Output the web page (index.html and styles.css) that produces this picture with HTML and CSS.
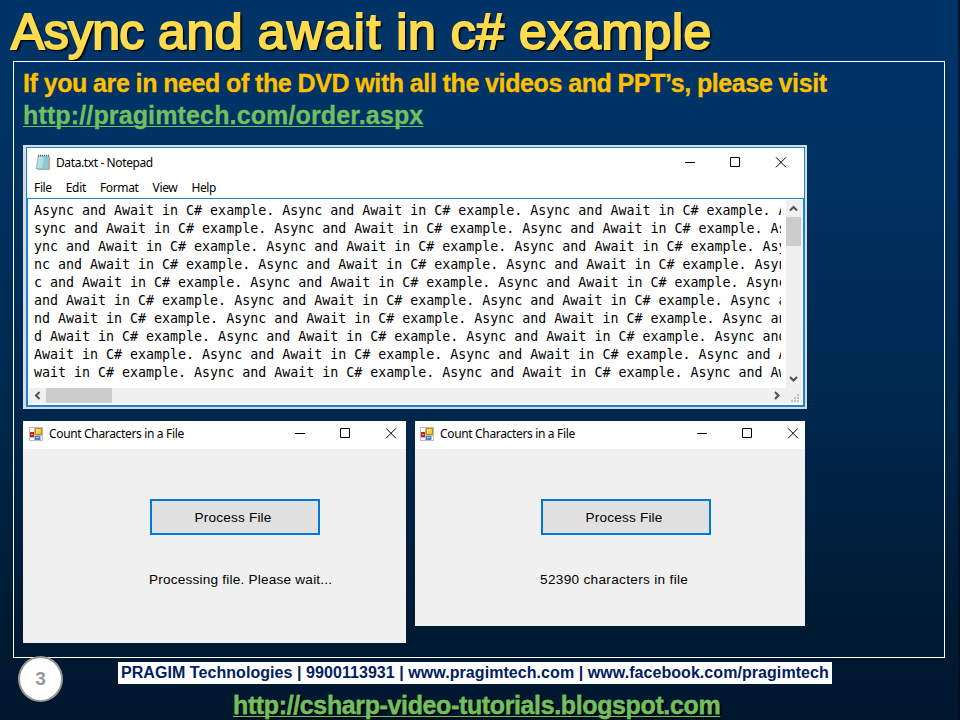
FILE: index.html
```html
<!DOCTYPE html>
<html lang="en">
<head>
<meta charset="utf-8">
<title>Async and await in c# example</title>
<link rel="stylesheet" href="styles.css">
</head>
<body>
<svg class="defs" width="0" height="0">
  <defs>
    <symbol id="controls" viewBox="0 0 102 11">
      <path d="M0 5.5H10M45.5 .5h9v9h-9zM91 .3l10 10M101 .3l-10 10" fill="none" stroke="#000" stroke-width="1"/>
    </symbol>
    <linearGradient id="gold" x1="0" y1="0" x2="1" y2="1"><stop offset="0" stop-color="#fff0a0"/><stop offset="1" stop-color="#efb000"/></linearGradient>
    <symbol id="form" viewBox="0 0 14 14">
      <path d="M0 0h14v14H0z" fill="#bdbdbd"/>
      <path d="M1 1h4v4H1zM1 11h4v2H1zM12 9h1v4h-1z" fill="#fff"/>
      <path d="M6.5 1.5h6v6h-6z" fill="url(#gold)" stroke="#c08c08"/>
      <path d="M1 5h4v5H1z" fill="#b52a20"/><path d="M2 7h2v1H2z" fill="#f5a090"/>
      <path d="M6 9h5v4H6z" fill="#4b7fd5"/><path d="M7 10h3v1H7z" fill="#a9caff"/>
    </symbol>
  </defs>
</svg>
<div class="slide">
  <h1 class="title"><span class="tight">Async</span> and <span class="loose">await</span> in c# example</h1>
  <main class="frame">
    <p class="lead need">If you are in need of the DVD with all the videos and PPT’s, please visit</p>
    <p class="lead"><a class="order">http://pragimtech.com/order.aspx</a></p>

    <section class="notepad">
      <div class="np-window">
        <header class="np-title">
          <svg class="np-icon" width="16" height="17" viewBox="0 0 16 17">
            <path d="M14 2l1 1v13H3z" fill="#b9ad90"/>
            <path d="M3 2h11l-1 13H1z" fill="#8cc9d5" stroke="#9ab4b8" stroke-width=".6"/>
            <path d="M4 3h5L7 14H2z" fill="#b5dfe7"/>
            <path d="M3 1.500h11" stroke="#4c6064" stroke-width="1.500" stroke-dasharray="1 1"/>
          </svg>
          <span class="ui-name">Data.txt - Notepad</span>
          <svg class="controls" width="102" height="11"><use href="#controls"/></svg>
        </header>
        <nav class="menu"><span>File</span><span>Edit</span><span>Format</span><span>View</span><span>Help</span></nav>
        <div class="editor">
<pre class="text">Async and Await in C# example. Async and Await in C# example. Async and Await in C# example. A
sync and Await in C# example. Async and Await in C# example. Async and Await in C# example. As
ync and Await in C# example. Async and Await in C# example. Async and Await in C# example. Asy
nc and Await in C# example. Async and Await in C# example. Async and Await in C# example. Asyn
c and Await in C# example. Async and Await in C# example. Async and Await in C# example. Async
and Await in C# example. Async and Await in C# example. Async and Await in C# example. Async a
nd Await in C# example. Async and Await in C# example. Async and Await in C# example. Async an
d Await in C# example. Async and Await in C# example. Async and Await in C# example. Async and
Await in C# example. Async and Await in C# example. Async and Await in C# example. Async and A
wait in C# example. Async and Await in C# example. Async and Await in C# example. Async and Aw</pre>
          <div class="vbar">
            <svg width="16" height="17" viewBox="0 0 16 17"><path d="M4 10.500l3.500-3.500 3.500 3.500" class="arrow"/></svg>
            <div class="vthumb"></div>
            <svg class="end" width="16" height="17" viewBox="0 0 16 17"><path d="M4 6l3.500 3.500L11 6" class="arrow"/></svg>
          </div>
          <div class="hbar">
            <svg width="17" height="15" viewBox="0 0 17 15"><path d="M10.500 4L7 7.500l3.500 3.500" class="arrow"/></svg>
            <div class="hthumb"></div>
            <svg class="end" width="17" height="15" viewBox="0 0 17 15"><path d="M6 4l3.500 3.500L6 11" class="arrow"/></svg>
          </div>
          <svg class="grip" width="16" height="15" viewBox="0 0 16 15"><path d="M11 6h2v2h-2zM8 9h2v2H8zM11 9h2v2h-2zM5 12h2v2H5zM8 12h2v2H8zM11 12h2v2h-2z" fill="#bfbfbf"/></svg>
        </div>
      </div>
    </section>

    <div class="forms">
      <section class="form form-wait">
        <header class="form-title">
          <svg width="14" height="14"><use href="#form"/></svg>
          <span class="form-name">Count Characters in a File</span>
          <svg class="controls" width="102" height="11"><use href="#controls"/></svg>
        </header>
        <button class="process">Process File</button>
        <p class="status">Processing file. Please wait...</p>
      </section>
      <section class="form form-done">
        <header class="form-title">
          <svg width="14" height="14"><use href="#form"/></svg>
          <span class="form-name">Count Characters in a File</span>
          <svg class="controls" width="102" height="11"><use href="#controls"/></svg>
        </header>
        <button class="process">Process File</button>
        <p class="status">52390 characters in file</p>
      </section>
    </div>
  </main>
  <footer class="footer">
    <div class="page">3</div>
    <div class="credits">
      <div class="strip">PRAGIM Technologies | 9900113931 | www.pragimtech.com | www.facebook.com/pragimtech</div>
      <a class="blog">http://csharp-video-tutorials.blogspot.com</a>
    </div>
  </footer>
</div>
</body>
</html>
```
FILE: styles.css
```css
* { box-sizing: border-box; }
body { margin: 0; font-family: "Liberation Sans", Arial, sans-serif; }
p, h1, pre { margin: 0; }
.defs { display: block; position: absolute; }
.slide {
  width: 960px; height: 720px; overflow: hidden;
  display: flex; flex-direction: column;
  background:
    linear-gradient(90deg, transparent 957px, #000c1c 960px),
    linear-gradient(#003366 0%, #003365 18%, #00284f 55%, #001a33 86%, #00172e 100%);
}
.title {
  height: 61px; padding-left: 11px; flex: none;
  font-size: 50px; line-height: 65px; font-weight: 400; letter-spacing: .55px; color: #ffdb4d;
  -webkit-text-stroke: 2px #ffdb4d;
  white-space: nowrap; text-shadow: 2px 2px 2px #000, 2px 2px 1px #000;
}
.tight { letter-spacing: -.7px; }
.loose { letter-spacing: 1.5px; }
.frame { height: 597px; flex: none; margin: 0 15px 0 13px; padding: 5px 0 0 9px; border: 1px solid #fff; }
.lead { height: 32px; line-height: 32px; font-size: 25px; font-weight: 700; white-space: nowrap; color: #ffc000; -webkit-text-stroke: .3px; }
.need { letter-spacing: -.38px; word-spacing: -.45px; }
.order, .blog { color: #72bf5e; text-decoration: underline; text-decoration-thickness: 1px; text-underline-offset: 2px; text-decoration-skip-ink: none; }
.order { letter-spacing: .14px; }

.notepad { width: 784px; height: 264px; margin-top: 14px; padding: 2px 2px 2px 3px; background: #d9dcdf; }
.np-window { height: 260px; border: 1px solid #1883d7; background: #fff; display: flex; flex-direction: column; font-family: "Noto Sans", "Open Sans", sans-serif; }
.np-title { height: 30px; display: flex; align-items: center; padding: 0 17px 2px 8px; flex: none; }
.ui-name { margin-left: 5px; font-size: 12px; letter-spacing: -.39px; }
.controls { margin-left: auto; }
.menu { height: 20px; display: flex; gap: 14px; padding-left: 7px; font-size: 12px; line-height: 20px; letter-spacing: -.35px; flex: none; }
.editor {
  flex: 1; min-height: 0; border: 1px solid #1883d7; padding: 1px 1px 2px 1px;
  display: grid; grid-template-columns: 1fr 16px; grid-template-rows: 1fr 15px;
}
.text {
  width: 747px; margin-left: 5px; padding-top: 2px; overflow: hidden; height: 188px;
  font: 13.3px/18px "DejaVu Sans Mono", monospace; color: #000;
}
.vbar { background: #f0f0f0; display: flex; flex-direction: column; }
.vthumb { width: 15px; height: 29px; background: #cdcdcd; }
.vbar .end { margin-top: auto; }
.hbar { background: #f0f0f0; display: flex; }
.hthumb { width: 66px; background: #cdcdcd; }
.hbar .end { margin-left: auto; }
.grip { background: #f0f0f0; }
.arrow { fill: none; stroke: #505050; stroke-width: 2; }

.forms { display: flex; gap: 9px; align-items: flex-start; margin-top: 12px; }
.form { background: #f0f0f0; }
.form-wait { width: 383px; height: 222px; }
.form-done { width: 390px; height: 205px; }
.form-title { height: 28px; background: #fff; display: flex; align-items: center; padding: 0 9px 3px 6px; }
.form-done .form-title { padding: 0 6px 3px 5px; }
.form-name { margin-left: 6px; font: 12px "Noto Sans", "Open Sans", sans-serif; letter-spacing: -.34px; }
.process {
  display: block; width: 170px; height: 36px; margin: 50px 0 0 127px; padding: 0 4px 0 0;
  border: 2px solid #0078d7; background: #e1e1e1; color: #000; font: 13.6px "Liberation Sans", sans-serif; letter-spacing: .2px;
}
.form-done .process { margin-left: 126px; }
.status { margin: 36px 0 0 126px; font-size: 13.6px; line-height: 18px; letter-spacing: .21px; color: #000; white-space: nowrap; }
.form-done .status { margin-left: 125px; letter-spacing: .32px; }

.footer { display: flex; flex: 1; }
.page {
  width: 45px; height: 46px; margin: -2px 0 0 18px; border: 2px solid #969696; border-radius: 50%;
  background: #fff; color: #969696; font-size: 19px; font-weight: 700; line-height: 42px; text-align: center; flex: none;
}
.credits { margin: 4px 0 0 55px; }
.strip { width: 714px; height: 22px; background: #fff; color: #002060; font-size: 16px; font-weight: 700; line-height: 21px; padding-left: 3px; letter-spacing: .06px; white-space: nowrap; }
.blog { display: inline-block; margin: 5px 0 0 115px; font-size: 25px; font-weight: 700; line-height: 32px; letter-spacing: -.37px; white-space: nowrap; text-shadow: 2px 2px 2px #000; -webkit-text-stroke: .3px; }
```
